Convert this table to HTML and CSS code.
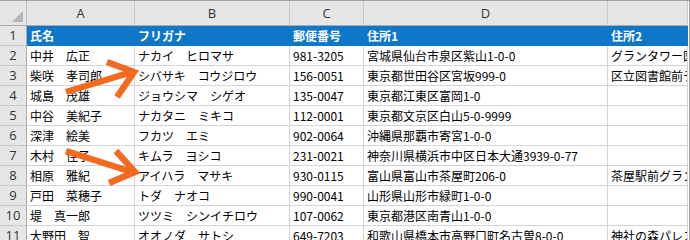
FILE: index.html
```html
<!DOCTYPE html>
<html lang="ja">
<head>
<meta charset="utf-8">
<link rel="stylesheet" href="styles.css">
</head>
<body>
<div class="sheet">
  <div class="grid">
    <div class="corner"><span class="tri"></span></div>
    <div class="ch">A</div><div class="ch">B</div><div class="ch">C</div><div class="ch">D</div><div class="ch"></div>

    <div class="rh">1</div>
    <div class="c hd">氏名</div><div class="c hd">フリガナ</div><div class="c hd">郵便番号</div><div class="c hd">住所1</div><div class="c hd">住所2</div>

    <div class="rh">2</div>
    <div class="c">中井　広正</div><div class="c">ナカイ　ヒロマサ</div><div class="c">981-3205</div><div class="c">宮城県仙台市泉区紫山1-0-0</div><div class="c">グランタワー図書館</div>

    <div class="rh">3</div>
    <div class="c">柴咲　孝司郎</div><div class="c">シバサキ　コウジロウ</div><div class="c">156-0051</div><div class="c">東京都世田谷区宮坂999-0</div><div class="c">区立図書館前テラス</div>

    <div class="rh">4</div>
    <div class="c">城島　茂雄</div><div class="c">ジョウシマ　シゲオ</div><div class="c">135-0047</div><div class="c">東京都江東区富岡1-0</div><div class="c"></div>

    <div class="rh">5</div>
    <div class="c">中谷　美紀子</div><div class="c">ナカタニ　ミキコ</div><div class="c">112-0001</div><div class="c">東京都文京区白山5-0-9999</div><div class="c"></div>

    <div class="rh">6</div>
    <div class="c">深津　絵美</div><div class="c">フカツ　エミ</div><div class="c">902-0064</div><div class="c">沖縄県那覇市寄宮1-0-0</div><div class="c"></div>

    <div class="rh">7</div>
    <div class="c">木村　佳子</div><div class="c">キムラ　ヨシコ</div><div class="c">231-0021</div><div class="c">神奈川県横浜市中区日本大通3939-0-77</div><div class="c"></div>

    <div class="rh">8</div>
    <div class="c">相原　雅紀</div><div class="c">アイハラ　マサキ</div><div class="c">930-0115</div><div class="c">富山県富山市茶屋町206-0</div><div class="c">茶屋駅前グランド</div>

    <div class="rh">9</div>
    <div class="c">戸田　菜穂子</div><div class="c">トダ　ナオコ</div><div class="c">990-0041</div><div class="c">山形県山形市緑町1-0-0</div><div class="c"></div>

    <div class="rh">10</div>
    <div class="c">堤　真一郎</div><div class="c">ツツミ　シンイチロウ</div><div class="c">107-0062</div><div class="c">東京都港区南青山1-0-0</div><div class="c"></div>

    <div class="rh">11</div>
    <div class="c">大野田　智</div><div class="c">オオノダ　サトシ</div><div class="c">649-7203</div><div class="c">和歌山県橋本市高野口町名古曽8-0-0</div><div class="c">神社の森パレス</div>
  </div>

  <svg class="arrows" width="690" height="240" viewBox="0 0 690 240">
    <g fill="none" stroke="#f26b21" stroke-width="6.5" stroke-linecap="butt" stroke-linejoin="miter">
      <path d="M66 92 L132 72"/>
      <path d="M107 62 L134 72 L117 97"/>
      <path d="M66 151 L132 172"/>
      <path d="M116 151 L135 172 L109 183"/>
    </g>
  </svg>
</div>
</body>
</html>
```

FILE: styles.css
```css
* { box-sizing: border-box; margin: 0; padding: 0; }
html, body { background: #ffffff; }
body { width: 690px; height: 240px; overflow: hidden; }

.sheet {
  position: relative;
  width: 690px;
  height: 240px;
  overflow: hidden;
  border-top: 1px solid #a0a0a0;
  border-right: 1px solid #a0a0a0;
}

.grid {
  display: grid;
  grid-template-columns: 27px 108px 155px 74px 244px 80px;
  grid-template-rows: 25px repeat(11, 20px);
}

.corner {
  position: relative;
  background: #e6e6e6;
  border-right: 1px solid #bdbdbd;
  border-bottom: 1px solid #ababab;
}
.tri {
  position: absolute;
  right: 3px;
  bottom: 3px;
  width: 0;
  height: 0;
  border-left: 11px solid transparent;
  border-bottom: 11px solid #b5b5b5;
}

.ch {
  background: #e6e6e6;
  border-right: 1px solid #c8c8c8;
  border-bottom: 1px solid #ababab;
  font-family: "Open Sans", "Liberation Sans", sans-serif;
  font-size: 13px;
  color: #333333;
  text-align: center;
  line-height: 24px;
}

.rh {
  background: #e6e6e6;
  border-right: 1px solid #ababab;
  border-bottom: 1px solid #c8c8c8;
  font-family: "Open Sans", "Liberation Sans", sans-serif;
  font-size: 13px;
  color: #333333;
  text-align: center;
  line-height: 19px;
}

.c {
  border-right: 1px solid #d4d4d4;
  border-bottom: 1px solid #d4d4d4;
  padding-left: 3px;
  font-family: "Noto Sans CJK JP", sans-serif;
  font-size: 12px;
  line-height: 19px;
  color: #000000;
  white-space: nowrap;
  overflow: visible;
}
.c:nth-child(6n) { overflow: hidden; }

.hd {
  background: #0f77c8;
  border-right-color: #0f77c8;
  border-bottom-color: #0f77c8;
  color: #ffffff;
  font-weight: bold;
}

.arrows {
  position: absolute;
  left: 0;
  top: -1px;
  pointer-events: none;
}
```
